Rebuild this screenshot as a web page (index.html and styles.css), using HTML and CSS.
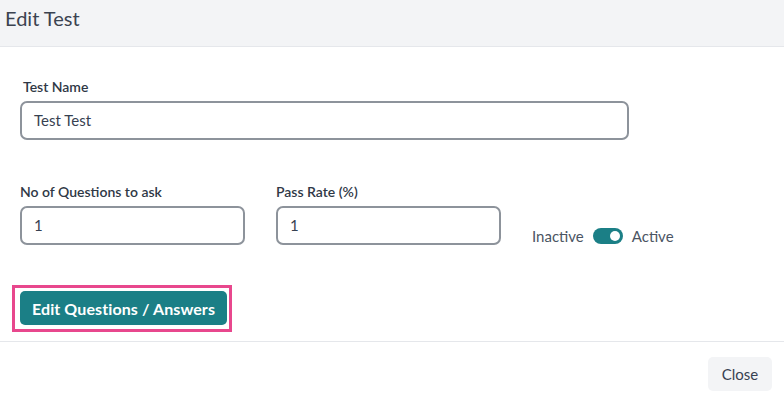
FILE: index.html
```html
<!DOCTYPE html>
<html>
<head>
<meta charset="utf-8">
<link rel="stylesheet" href="styles.css">
</head>
<body>
<div class="modal">
  <header class="modal-header">
    <h1 class="title">Edit Test</h1>
  </header>
  <main class="modal-body">
    <div class="field field-name">
      <label class="label label-indent">Test Name</label>
      <div class="input input-wide">Test Test</div>
    </div>
    <div class="row">
      <div class="field">
        <label class="label">No of Questions to ask</label>
        <div class="input input-small">1</div>
      </div>
      <div class="field">
        <label class="label">Pass Rate (%)</label>
        <div class="input input-small">1</div>
      </div>
      <div class="toggle-group">
        <span class="toggle-text">Inactive</span>
        <span class="toggle"><span class="knob"></span></span>
        <span class="toggle-text">Active</span>
      </div>
    </div>
    <div class="btn-ring">
      <button class="btn-primary">Edit Questions / Answers</button>
    </div>
  </main>
  <footer class="modal-footer">
    <button class="btn-close">Close</button>
  </footer>
</div>
</body>
</html>
```
FILE: styles.css
```css
* { box-sizing: border-box; }
html, body { margin: 0; padding: 0; background: #fff; }
body { font-family: Lato, "Noto Sans", sans-serif; color: #374151; width: 784px; height: 398px; overflow: hidden; }
.modal-header {
  height: 47px;
  background: #f3f4f6;
  border-bottom: 1px solid #e5e7eb;
  padding: 6px 0 0 5px;
}
.title { margin: 0; font-size: 20px; font-weight: 400; color: #3b4350; line-height: 24px; }
.modal-body { padding: 31px 20px 0 20px; }
.field { display: flex; flex-direction: column; }
.label { font-size: 14px; font-weight: 600; line-height: 17px; color: #2f3846; margin-bottom: 6px; }
.label-indent { padding-left: 3px; }
.input {
  height: 39px;
  border: 2px solid #8d939b;
  border-radius: 7px;
  padding: 0 12px;
  font-size: 15px;
  line-height: 35px;
  color: #374151;
}
.input-wide { width: 609px; }
.input-small { width: 225px; }
.row { display: flex; align-items: flex-end; gap: 31px; margin-top: 43px; }
.toggle-group { display: flex; align-items: center; gap: 9px; height: 22px; margin-bottom: -2px; }
.toggle-text { font-size: 15px; color: #4b5563; }
.toggle {
  width: 30px; height: 16px; border-radius: 8px; background: #1b7f86;
  display: flex; align-items: center; justify-content: flex-end; padding-right: 3px;
}
.knob { width: 10px; height: 10px; border-radius: 50%; background: #fff; }
.btn-ring {
  display: inline-block;
  margin-top: 40px;
  margin-left: -8px;
  border: 3px solid #e8478d;
  padding: 3px 2px 4px 5px;
}
.btn-primary {
  display: block;
  width: 207px; height: 34px;
  border: none; border-radius: 5px;
  background: #1b7f86; color: #fff;
  font-family: Lato, "Noto Sans", sans-serif;
  font-size: 16px; font-weight: 700; letter-spacing: 0.1px;
  padding: 0;
}
.modal-footer {
  margin-top: 9px;
  border-top: 1px solid #e5e7eb;
  display: flex; justify-content: flex-end;
  padding: 15px 12px 0 0;
}
.btn-close {
  width: 64px; height: 34px;
  border: none; border-radius: 5px;
  background: #f3f4f6; color: #374151;
  font-family: Lato, "Noto Sans", sans-serif;
  font-size: 15px; padding: 0;
}
```
